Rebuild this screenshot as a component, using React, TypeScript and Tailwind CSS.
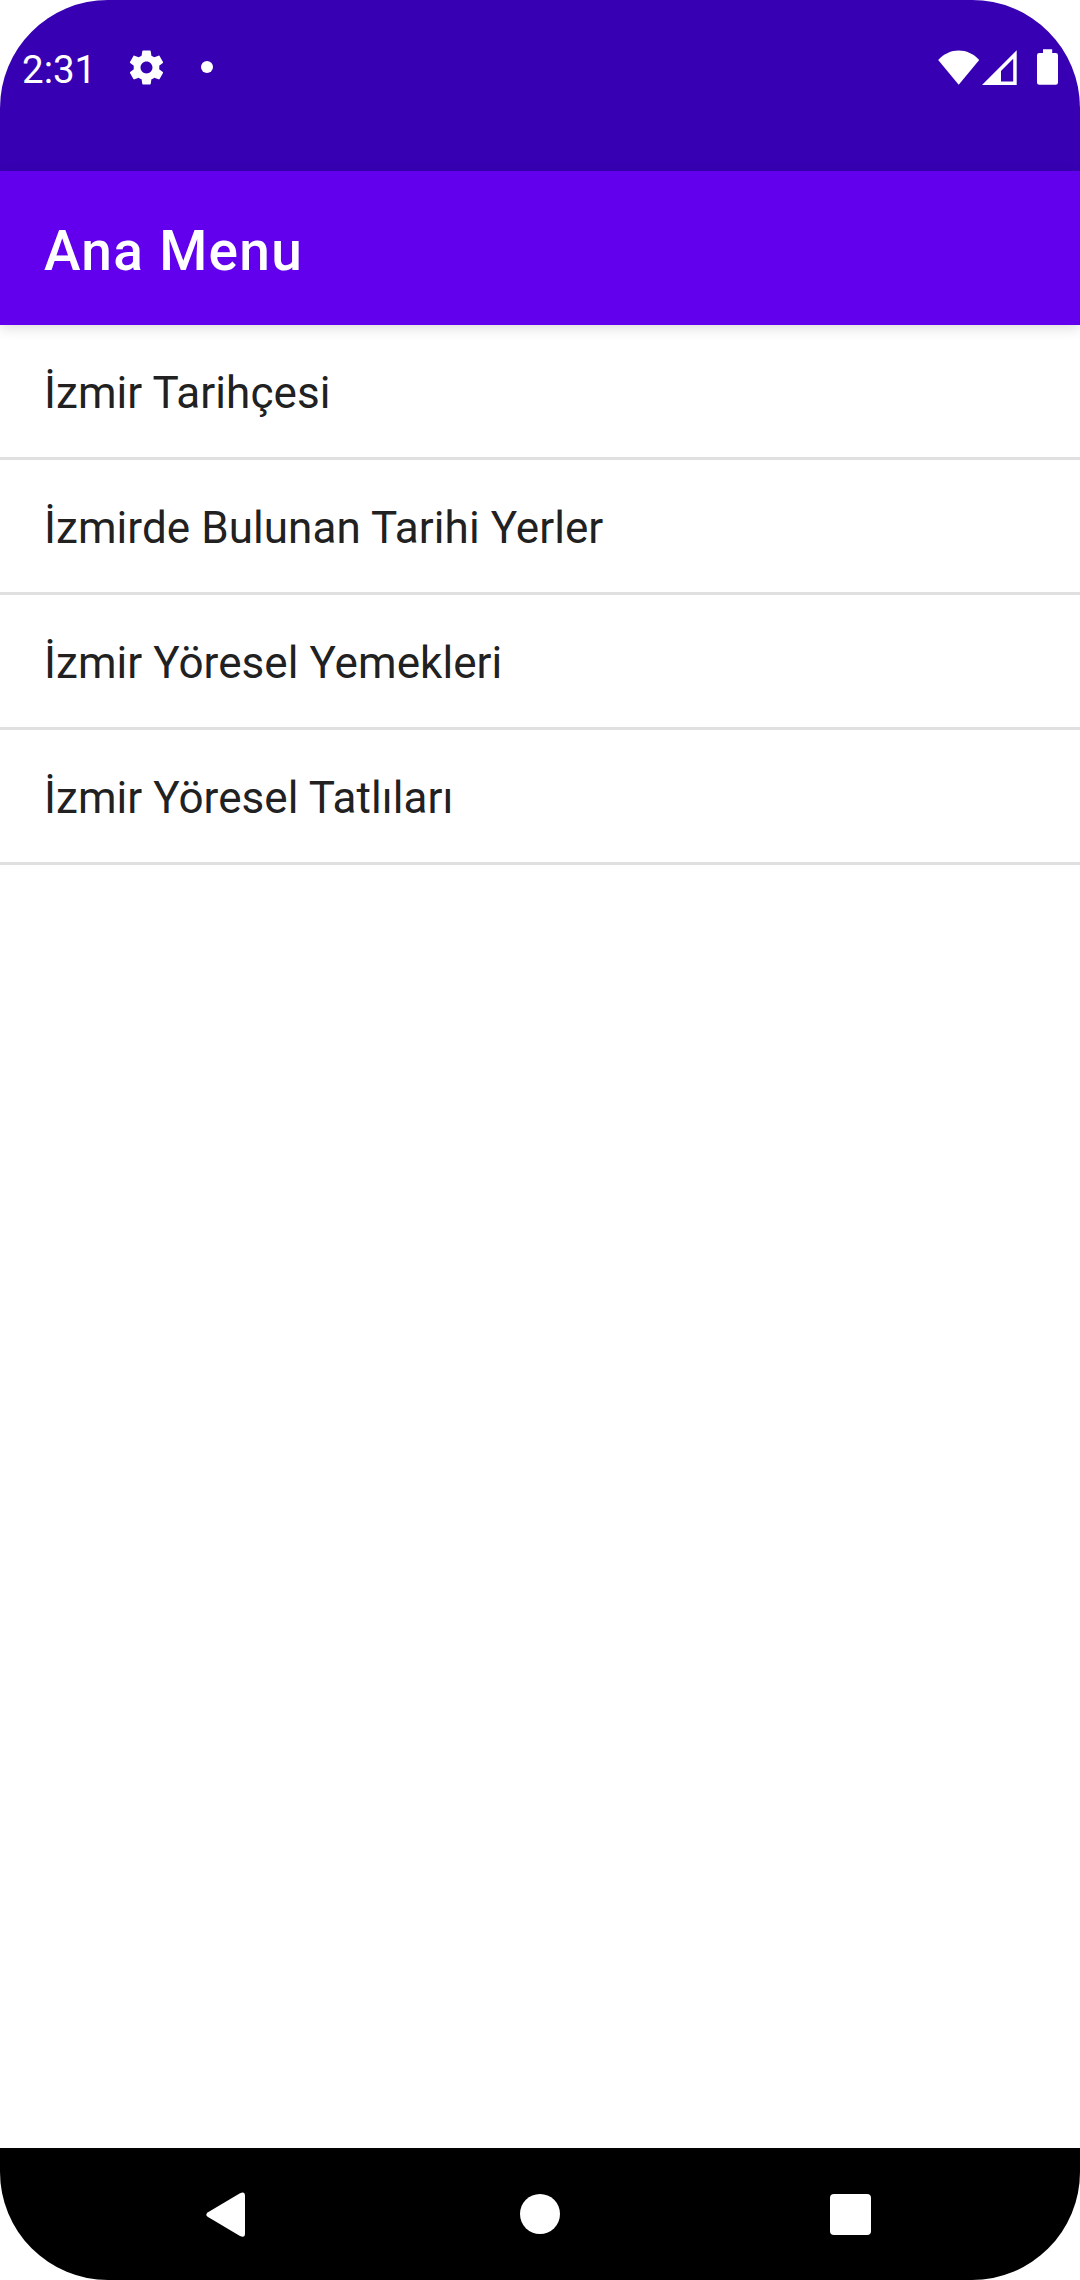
const items = [
  'İzmir Tarihçesi',
  'İzmirde Bulunan Tarihi Yerler',
  'İzmir Yöresel Yemekleri',
  'İzmir Yöresel Tatlıları',
];

function StatusBar() {
  return (
    <div className="flex h-[171px] shrink-0 items-start justify-between bg-[#3700b3] px-[22px] text-white">
      <div className="flex h-[135px] items-center">
        <span className="w-[104px] pt-[5px] text-[38.5px] leading-none">2:31</span>
        <svg className="size-[41px]" viewBox="0 0 24 24" fill="currentColor">
          <path d="M19.43 12.98c.04-.32.07-.64.07-.98s-.03-.66-.07-.98l2.11-1.65c.19-.15.24-.42.12-.64l-2-3.46c-.12-.22-.39-.3-.61-.22l-2.49 1c-.52-.4-1.08-.73-1.69-.98l-.38-2.65C14.46 2.18 14.25 2 14 2h-4c-.25 0-.46.18-.49.42l-.38 2.65c-.61.25-1.17.59-1.69.98l-2.49-1c-.23-.09-.49 0-.61.22l-2 3.46c-.13.22-.07.49.12.64l2.11 1.65c-.04.32-.07.65-.07.98s.03.66.07.98l-2.11 1.65c-.19.15-.24.42-.12.64l2 3.46c.12.22.39.3.61.22l2.49-1c.52.4 1.08.73 1.69.98l.38 2.65c.03.24.24.42.49.42h4c.25 0 .46-.18.49-.42l.38-2.65c.61-.25 1.17-.59 1.69-.98l2.49 1c.23.09.49 0 .61-.22l2-3.46c.12-.22.07-.49-.12-.64l-2.11-1.65zM12 15.5c-1.93 0-3.5-1.57-3.5-3.5s1.57-3.5 3.5-3.5 3.5 1.57 3.5 3.5-1.57 3.5-3.5 3.5z" />
        </svg>
        <div className="mb-px ml-[34px] size-3 rounded-full bg-white" />
      </div>
      <div className="flex h-[134px] items-center">
        <svg className="h-9 w-[42px]" viewBox="0 0 42 36" fill="currentColor">
          <path d="M0.2 11C6 4.700 13 1.500 20.700 1.500S35.400 4.700 41.200 11L20.700 35.700z" />
        </svg>
        <svg className="ml-0.5 h-9 w-[35px]" viewBox="0 0 35 36" fill="currentColor">
          <path fillRule="evenodd" d="M0 36L34.700 1.300V36zM19 22V32.400H31.200V9.800z" />
        </svg>
        <svg className="ml-5 h-9 w-[21px]" viewBox="0 0 21 36" fill="currentColor">
          <path d="M6 .3h9.200v3.700h3.500q2.300 0 2.300 2.300v27.200q0 2.300-2.300 2.300H2.300Q0 35.800 0 33.500V6.300Q0 4 2.300 4H6z" />
        </svg>
      </div>
    </div>
  );
}

function NavigationBar() {
  return (
    <nav className="flex h-[132px] shrink-0 items-center justify-between bg-black pl-[206px] pr-[209px] text-white">
      <svg className="mt-px h-[46px] w-10" viewBox="0 0 40 46" fill="currentColor">
        <path d="M2 20.200L34 1.300Q39 -.9 39 4V41.500Q39 46.200 34 44L2 25.100Q-1.400 22.600 2 20.200z" />
      </svg>
      <div className="ml-[3px] size-10 rounded-full bg-white" />
      <div className="mt-px size-[41px] rounded-[4px] bg-white" />
    </nav>
  );
}

export default function App() {
  return (
    <div className="h-[2280px] w-[1080px] bg-white">
      <div className="flex h-full flex-col overflow-hidden rounded-[108px] bg-white font-['Roboto',sans-serif]">
        <StatusBar />
        <header className="z-10 flex h-[154px] shrink-0 items-center bg-[#6200ee] pl-11 pt-[7px] shadow-[0_3px_12px_rgba(0,0,0,0.14)]">
          <h1 className="text-[55px] font-medium leading-none tracking-[1.3px] text-white">Ana Menu</h1>
        </header>
        <main className="flex-1">
          <ul>
            {items.map((item) => (
              <li key={item} className="flex h-[135px] items-center border-b-[3px] border-[#e0e0e0] pl-11 pt-[3px] text-[44px] leading-none tracking-[0.07px] text-[#212121]">
                {item}
              </li>
            ))}
          </ul>
        </main>
        <NavigationBar />
      </div>
    </div>
  );
}
